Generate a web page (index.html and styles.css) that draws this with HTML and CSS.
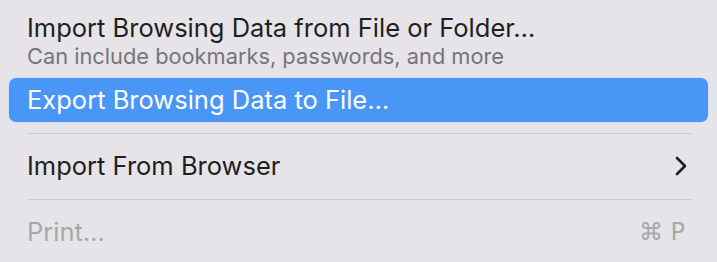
FILE: index.html
```html
<!DOCTYPE html>
<html lang="en">
<head>
  <meta charset="UTF-8">
  <meta name="viewport" content="width=device-width, initial-scale=1.0">
  <title>File Menu</title>
  <link rel="stylesheet" href="styles.css">
</head>
<body>
<div class="menu">
  <div class="menu-item menu-item-double">
    <div class="item-title">Import Browsing Data from File or Folder…</div>
    <div class="item-sub">Can include bookmarks, passwords, and more</div>
  </div>
  <div class="menu-item active">
    <span class="item-title">Export Browsing Data to File…</span>
  </div>
  <div class="separator"></div>
  <div class="menu-item">
    <span class="item-title">Import From Browser</span>
    <svg class="chevron" width="14" height="20" viewBox="0 0 14 20">
      <polyline points="3,2 11,10 3,18" fill="none" stroke="#1e1e20" stroke-width="2.6" stroke-linecap="round" stroke-linejoin="round"/>
    </svg>
  </div>
  <div class="separator"></div>
  <div class="menu-item disabled">
    <span class="item-title">Print…</span>
    <span class="shortcut">⌘ P</span>
  </div>
</div>
</body>
</html>
```

FILE: styles.css
```css
body {
  margin: 0;
  background-color: #e6e4e8;
  font-family: Inter, "Noto Sans", sans-serif;
  color: #1f1f21;
}

.menu {
  width: 717px;
  height: 262px;
  padding: 0 9px;
  box-sizing: border-box;
  overflow: hidden;
}

.menu-item {
  display: flex;
  align-items: center;
  justify-content: space-between;
  height: 44px;
  padding: 0 18px;
  border-radius: 7px;
  font-size: 25.5px;
  line-height: 44px;
}

.menu-item-double {
  display: block;
  height: auto;
  padding-top: 12px;
  margin-bottom: 10px;
}

.menu-item-double .item-title {
  line-height: 32px;
}

.item-sub {
  font-size: 21.8px;
  line-height: 24px;
  color: #767578;
}

.menu-item.active {
  background-color: #4a96f7;
  color: #fff;
  box-shadow: 0 0 0 1px #d3e1f5;
}

.separator {
  height: 1px;
  background-color: #cdcbd0;
  margin: 11px 16px 10px 18px;
}

.chevron {
  display: block;
  margin-right: 2px;
}

.disabled {
  color: #a8a7aa;
}

.shortcut {
  font-family: "DejaVu Sans", Inter, sans-serif;
  font-size: 24px;
  color: #a8a7aa;
  margin-right: 5px;
}
```
